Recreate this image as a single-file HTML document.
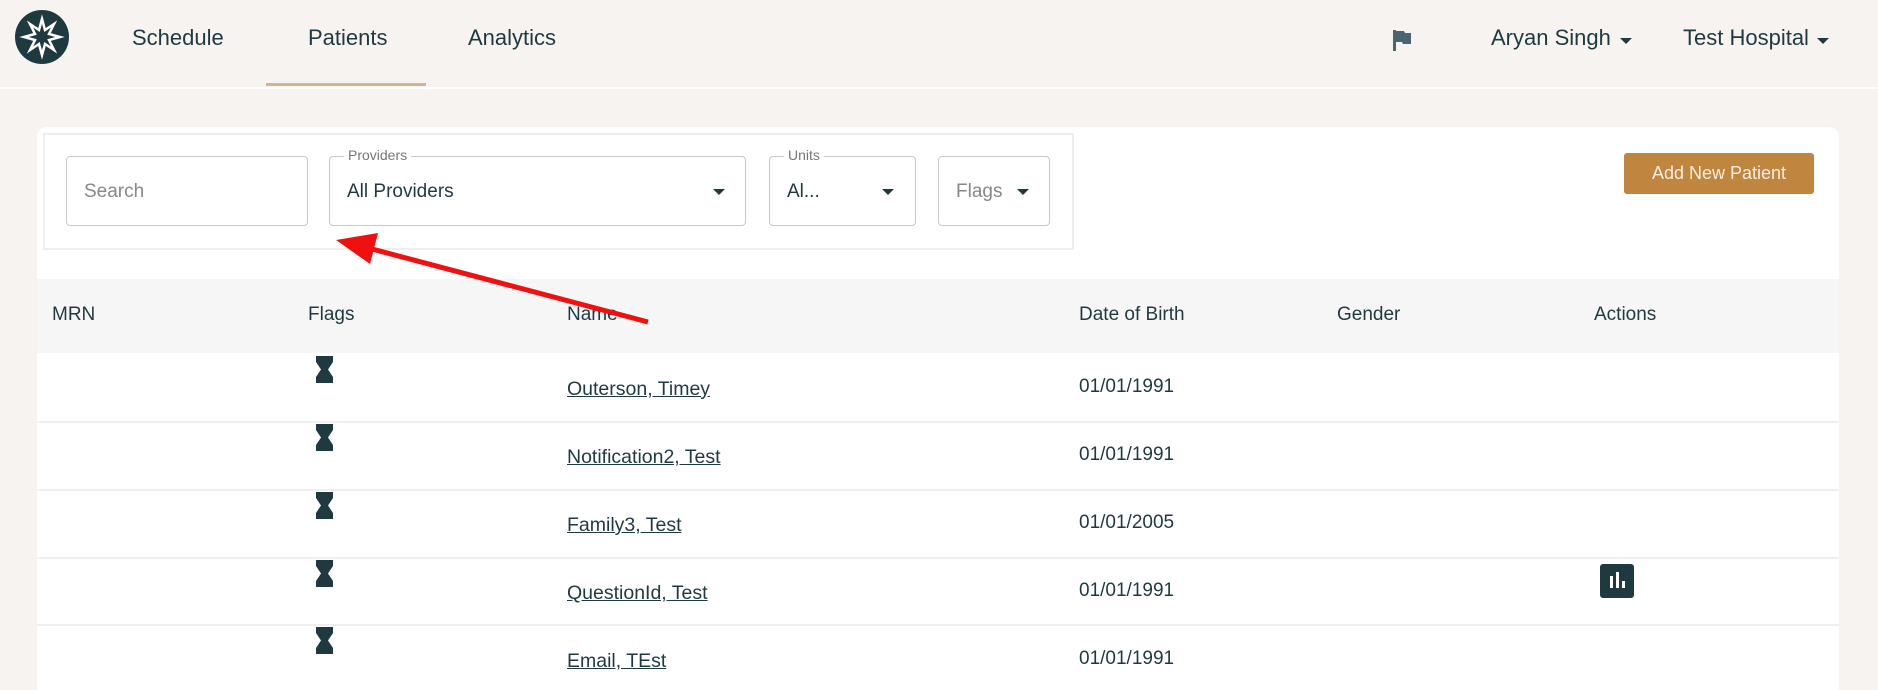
<!DOCTYPE html>
<html><head><meta charset="utf-8"><style>
*{margin:0;padding:0;box-sizing:border-box}
html,body{width:1878px;height:690px;overflow:hidden}
body{background:#f6f3f0;font-family:"Liberation Sans",sans-serif;color:#1e3a40;position:relative}
.a{position:absolute}
.nav{font-size:22px;top:25px}
.card{left:37px;top:127px;width:1802px;height:563px;background:#fff;border-radius:10px 10px 0 0}
.fbox{left:43px;top:133px;width:1031px;height:117px;border:2px solid #eeeeee}
.inp{top:156px;height:70px;border:1px solid #c9c9c9;border-radius:4px;background:#fff}
.lbl{font-size:14px;color:#777;background:#fff;padding:0 4px;top:-10px;left:14px}
.val{font-size:19px;top:24px;left:17px}
.car{width:0;height:0;border-left:6px solid transparent;border-right:6px solid transparent;border-top:6px solid #1e3a40}
.th{top:279px;left:37px;width:1802px;height:74px;background:#f6f6f6}
.hd{font-size:19px;top:304px}
.row{left:37px;width:1802px;height:2px;background:#efefef}
.nm{font-size:19.5px;text-decoration:underline;left:567px}
.dob{font-size:19px;left:1079px}
</style></head><body>
<svg class="a" style="left:15px;top:10px" width="54" height="54" viewBox="0 0 54 54"><circle cx="27" cy="27" r="27" fill="#1e3a40"/><polygon points="27,9 30,20 39,14 34,24 45,27 34,30 39,40 30,34 27,45 24,34 15,40 20,30 9,27 20,24 15,14 24,20" fill="none" stroke="#fff" stroke-width="2.5"/></svg>
<div class="a nav" style="left:132px">Schedule</div>
<div class="a nav" style="left:308px">Patients</div>
<div class="a nav" style="left:468px">Analytics</div>
<div class="a" style="left:266px;top:83px;width:160px;height:3px;background:#d2b48f"></div>
<div class="a" style="left:0;top:87px;width:1878px;height:2px;background:#fff"></div>
<svg class="a" style="left:1391px;top:28px" width="22" height="24" viewBox="0 0 22 24"><rect x="2" y="2" width="3" height="21" fill="#4a6472"/><path d="M5 3h8l1 2h6v11h-8l-1-2H5z" fill="#4a6472"/></svg>
<div class="a nav" style="left:1491px">Aryan Singh</div><div class="a car" style="left:1620px;top:38px"></div>
<div class="a nav" style="left:1683px">Test Hospital</div><div class="a car" style="left:1817px;top:38px"></div>
<div class="a card"></div>
<div class="a fbox"></div>
<div class="a inp" style="left:66px;width:242px"><div class="a val" style="color:#888">Search</div></div>
<div class="a inp" style="left:329px;width:417px"><div class="a lbl">Providers</div><div class="a val">All Providers</div><div class="a car" style="left:383px;top:32px"></div></div>
<div class="a inp" style="left:769px;width:147px"><div class="a lbl">Units</div><div class="a val">Al...</div><div class="a car" style="left:112px;top:32px"></div></div>
<div class="a inp" style="left:938px;width:112px"><div class="a val" style="color:#888">Flags</div><div class="a car" style="left:78px;top:32px"></div></div>
<div class="a" style="left:1624px;top:153px;width:190px;height:41px;background:#c0853f;border-radius:3px;color:#fbeee0;font-size:18px;text-align:center;line-height:41px">Add New Patient</div>
<div class="a th"></div>
<div class="a hd" style="left:52px">MRN</div>
<div class="a hd" style="left:308px">Flags</div>
<div class="a hd" style="left:567px">Name</div>
<div class="a hd" style="left:1079px">Date of Birth</div>
<div class="a hd" style="left:1337px">Gender</div>
<div class="a hd" style="left:1594px">Actions</div>

<div class="a row" style="top:421px"></div><div class="a row" style="top:489px"></div><div class="a row" style="top:557px"></div><div class="a row" style="top:624px"></div>

<svg class="a" style="left:316px;top:356px" width="17" height="27" viewBox="0 0 17 27"><path d="M0 0h17v6l-5 7.5 5 7.5v6H0v-6l5-7.5L0 6z" fill="#1e3a40"/></svg>
<svg class="a" style="left:316px;top:424px" width="17" height="27" viewBox="0 0 17 27"><path d="M0 0h17v6l-5 7.5 5 7.5v6H0v-6l5-7.5L0 6z" fill="#1e3a40"/></svg>
<svg class="a" style="left:316px;top:492px" width="17" height="27" viewBox="0 0 17 27"><path d="M0 0h17v6l-5 7.5 5 7.5v6H0v-6l5-7.5L0 6z" fill="#1e3a40"/></svg>
<svg class="a" style="left:316px;top:560px" width="17" height="27" viewBox="0 0 17 27"><path d="M0 0h17v6l-5 7.5 5 7.5v6H0v-6l5-7.5L0 6z" fill="#1e3a40"/></svg>
<svg class="a" style="left:316px;top:627px" width="17" height="27" viewBox="0 0 17 27"><path d="M0 0h17v6l-5 7.5 5 7.5v6H0v-6l5-7.5L0 6z" fill="#1e3a40"/></svg>

<div class="a nm" style="top:378px">Outerson, Timey</div><div class="a dob" style="top:376px">01/01/1991</div>
<div class="a nm" style="top:446px">Notification2, Test</div><div class="a dob" style="top:444px">01/01/1991</div>
<div class="a nm" style="top:514px">Family3, Test</div><div class="a dob" style="top:512px">01/01/2005</div>
<div class="a nm" style="top:582px">QuestionId, Test</div><div class="a dob" style="top:580px">01/01/1991</div>
<div class="a nm" style="top:650px">Email, TEst</div><div class="a dob" style="top:648px">01/01/1991</div>

<svg class="a" style="left:1600px;top:564px" width="34" height="34" viewBox="0 0 34 34"><rect width="34" height="34" rx="3" fill="#1e3a40"/><rect x="10" y="12" width="3" height="12" fill="#fff"/><rect x="16" y="8" width="3" height="16" fill="#fff"/><rect x="22" y="17" width="3" height="7" fill="#fff"/></svg>

<svg class="a" style="left:0;top:0" width="1878" height="690"><line x1="648" y1="322" x2="372" y2="249" stroke="#f01010" stroke-width="5"/><polygon points="336,240 378,233 370,264" fill="#f01010"/></svg>
</body></html>
